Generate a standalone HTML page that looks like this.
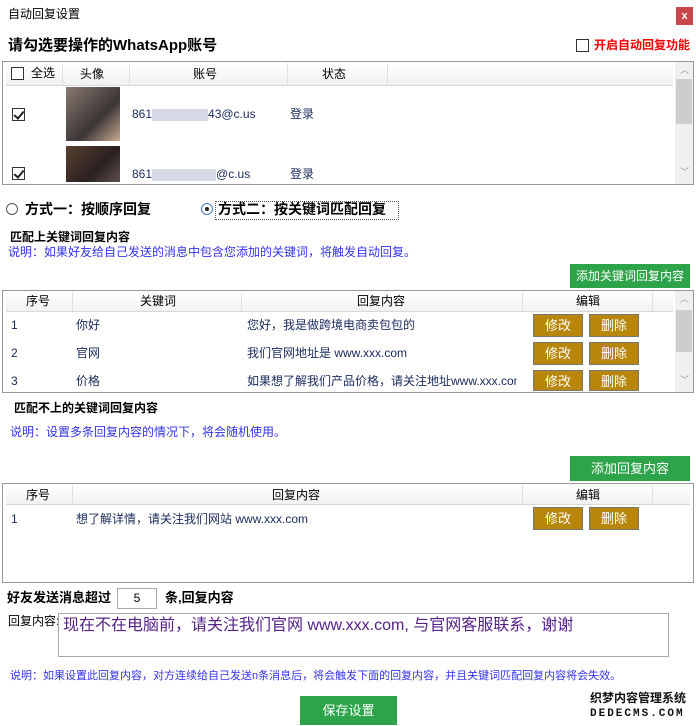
<!DOCTYPE html>
<html><head><meta charset="utf-8"><style>
*{margin:0;padding:0;box-sizing:border-box}
body{width:696px;height:726px;background:#fff;position:relative;overflow:hidden;font-family:"Liberation Sans","Noto Sans CJK SC",sans-serif;font-size:12px;color:#000}
.a{position:absolute;white-space:nowrap;line-height:1}
.box{position:absolute;border:1px solid #999;background:#fff}
.hdr{position:absolute;left:3px;right:3px;background:linear-gradient(#fff,#f1f1f1);border-bottom:1px solid #d8d8d8}
.col{position:absolute;top:0;bottom:0;border-right:1px solid #e0e0e0}
.sb{position:absolute;right:0;top:0;bottom:0;width:18px;background:#f0f0f0}
.sbt{position:absolute;left:1px;width:16px;background:#cdcdcd}
.cb{position:absolute;width:13px;height:13px;border:1px solid #333;background:#fff}
.ck::after{content:"";position:absolute;left:3px;top:0px;width:4px;height:8px;border:solid #222;border-width:0 2px 2px 0;transform:rotate(40deg)}
.btn{position:absolute;background:#b8860b;border:1px solid #777;color:#fff;font-size:13px;text-align:center;line-height:21px;width:50px;height:23px}
.gbtn{position:absolute;background:#2ea44a;color:#fff;font-size:13px;text-align:center}
.t{color:#1a2a5c}
.blue{color:#3333ee}
</style></head><body>
<div class="a" style="left:8px;top:8px;font-size:12px">自动回复设置</div>
<div class="a" style="left:676px;top:7px;width:17px;height:18px;background:#c9474b;color:#fff;font-size:11px;font-weight:bold;text-align:center;line-height:18px">x</div>

<div class="a" style="left:8px;top:38px;font-size:15px;font-weight:bold">请勾选要操作的WhatsApp账号</div>
<div class="cb" style="left:576px;top:39px"></div>
<div class="a" style="left:594px;top:39px;color:#e00;font-size:12px;font-weight:bold">开启自动回复功能</div>

<div class="box" style="left:2px;top:61px;width:692px;height:124px">
 <div class="hdr" style="top:1px;height:23px;right:20px">
  <div class="col" style="left:0;width:57px"></div>
  <div class="col" style="left:57px;width:67px"></div>
  <div class="col" style="left:124px;width:158px"></div>
  <div class="col" style="left:282px;width:100px"></div>
 </div>
 <div class="sb"><div class="sbt" style="top:17px;height:45px"></div>
  <div class="a" style="left:5px;top:4px;color:#999;font-size:9px">︿</div>
  <div class="a" style="left:5px;top:106px;color:#999;font-size:9px">﹀</div></div>
</div>
<div class="cb" style="left:11px;top:67px"></div>
<div class="a" style="left:31px;top:67px">全选</div>
<div class="a" style="left:80px;top:68px">头像</div>
<div class="a" style="left:193px;top:68px">账号</div>
<div class="a" style="left:322px;top:68px">状态</div>
<div class="cb ck" style="left:12px;top:108px"></div>
<div class="a" style="left:66px;top:87px;width:54px;height:54px;background:linear-gradient(135deg,#8a7a70,#3a3535 60%,#c8a890)"></div>
<div class="a t" style="left:132px;top:108px;font-size:12px">861<span style="display:inline-block;width:56px;height:12px;background:#d5d9e6;vertical-align:middle"></span>43@c.us</div>
<div class="a t" style="left:290px;top:108px">登录</div>
<div class="cb ck" style="left:12px;top:167px"></div>
<div class="a" style="left:66px;top:146px;width:54px;height:36px;background:linear-gradient(135deg,#5a4030,#2a2020 60%,#605050)"></div>
<div class="a t" style="left:132px;top:168px;font-size:12px">861<span style="display:inline-block;width:64px;height:12px;background:#d5d9e6;vertical-align:middle"></span>@c.us</div>
<div class="a t" style="left:290px;top:168px">登录</div>

<div class="a" style="left:6px;top:203px;width:12px;height:12px;border:1px solid #555;border-radius:50%"></div>
<div class="a" style="left:25px;top:202px;font-size:14px;font-weight:bold">方式一：按顺序回复</div>
<div class="a" style="left:201px;top:203px;width:12px;height:12px;border:1px solid #4a7acc;border-radius:50%"><div style="position:absolute;left:3px;top:3px;width:4px;height:4px;background:#222;border-radius:50%"></div></div>
<div class="a" style="left:215px;top:201px;width:184px;height:19px;border:1px dotted #555"></div>
<div class="a" style="left:218px;top:202px;font-size:14px;font-weight:bold">方式二：按关键词匹配回复</div>

<div class="a" style="left:10px;top:231px;font-weight:bold">匹配上关键词回复内容</div>
<div class="a blue" style="left:8px;top:246px">说明：如果好友给自己发送的消息中包含您添加的关键词，将触发自动回复。</div>
<div class="gbtn" style="left:570px;top:264px;width:120px;height:24px;line-height:24px;font-size:12px">添加关键词回复内容</div>

<div class="box" style="left:2px;top:290px;width:692px;height:103px">
 <div class="hdr" style="top:1px;height:20px;right:20px">
  <div class="col" style="left:0;width:67px"></div>
  <div class="col" style="left:67px;width:169px"></div>
  <div class="col" style="left:236px;width:281px"></div>
  <div class="col" style="left:517px;width:130px"></div>
 </div>
 <div class="sb"><div class="sbt" style="top:19px;height:42px"></div>
  <div class="a" style="left:5px;top:4px;color:#999;font-size:9px">︿</div>
  <div class="a" style="left:5px;top:85px;color:#999;font-size:9px">﹀</div></div>
</div>
<div class="a" style="left:26px;top:295px">序号</div>
<div class="a" style="left:140px;top:295px">关键词</div>
<div class="a" style="left:357px;top:295px">回复内容</div>
<div class="a" style="left:576px;top:295px">编辑</div>
<div class="a t" style="left:11px;top:319px">1</div><div class="a t" style="left:76px;top:319px">你好</div><div class="a t" style="left:247px;top:319px">您好，我是做跨境电商卖包包的</div>
<div class="a t" style="left:11px;top:347px">2</div><div class="a t" style="left:76px;top:347px">官网</div><div class="a t" style="left:247px;top:347px">我们官网地址是 www.xxx.com</div>
<div class="a t" style="left:11px;top:375px">3</div><div class="a t" style="left:76px;top:375px">价格</div><div class="a t" style="left:247px;top:375px;width:270px;overflow:hidden">如果想了解我们产品价格，请关注地址www.xxx.com</div>
<div class="btn" style="left:533px;top:314px">修改</div><div class="btn" style="left:589px;top:314px">删除</div>
<div class="btn" style="left:533px;top:342px">修改</div><div class="btn" style="left:589px;top:342px">删除</div>
<div class="btn" style="left:533px;top:370px;height:21px">修改</div><div class="btn" style="left:589px;top:370px;height:21px">删除</div>

<div class="a" style="left:14px;top:402px;font-weight:bold">匹配不上的关键词回复内容</div>
<div class="a blue" style="left:10px;top:426px">说明：设置多条回复内容的情况下，将会随机使用。</div>
<div class="gbtn" style="left:570px;top:456px;width:120px;height:25px;line-height:25px">添加回复内容</div>

<div class="box" style="left:2px;top:483px;width:692px;height:100px">
 <div class="hdr" style="top:1px;height:20px">
  <div class="col" style="left:0;width:67px"></div>
  <div class="col" style="left:67px;width:450px"></div>
  <div class="col" style="left:517px;width:130px"></div>
 </div>
</div>
<div class="a" style="left:26px;top:489px">序号</div>
<div class="a" style="left:272px;top:489px">回复内容</div>
<div class="a" style="left:576px;top:489px">编辑</div>
<div class="a t" style="left:11px;top:513px">1</div>
<div class="a t" style="left:76px;top:513px">想了解详情，请关注我们网站 www.xxx.com</div>
<div class="btn" style="left:533px;top:507px">修改</div><div class="btn" style="left:589px;top:507px">删除</div>

<div class="a" style="left:7px;top:591px;font-size:13px;font-weight:bold">好友发送消息超过</div>
<div class="a" style="left:117px;top:588px;width:40px;height:21px;border:1px solid #aaa;text-align:center;line-height:19px">5</div>
<div class="a" style="left:165px;top:591px;font-size:13px;font-weight:bold">条,回复内容</div>
<div class="a" style="left:8px;top:615px">回复内容:</div>
<div class="a" style="left:58px;top:613px;width:611px;height:44px;border:1px solid #aaa"></div>
<div class="a" style="left:63px;top:618px;font-size:16px;color:#552288">现在不在电脑前，请关注我们官网 www.xxx.com, 与官网客服联系，谢谢</div>
<div class="a blue" style="left:10px;top:671px;font-size:11px">说明：如果设置此回复内容，对方连续给自己发送n条消息后，将会触发下面的回复内容，并且关键词匹配回复内容将会失效。</div>
<div class="gbtn" style="left:300px;top:696px;width:97px;height:29px;line-height:29px">保存设置</div>
<div class="a" style="left:590px;top:692px;font-size:12px;font-weight:bold;color:#111">织梦内容管理系统</div>
<div class="a" style="left:590px;top:709px;font-size:11px;font-weight:bold;letter-spacing:2px;color:#111;font-family:'Liberation Mono',monospace">DEDECMS.COM</div>
</body></html>
